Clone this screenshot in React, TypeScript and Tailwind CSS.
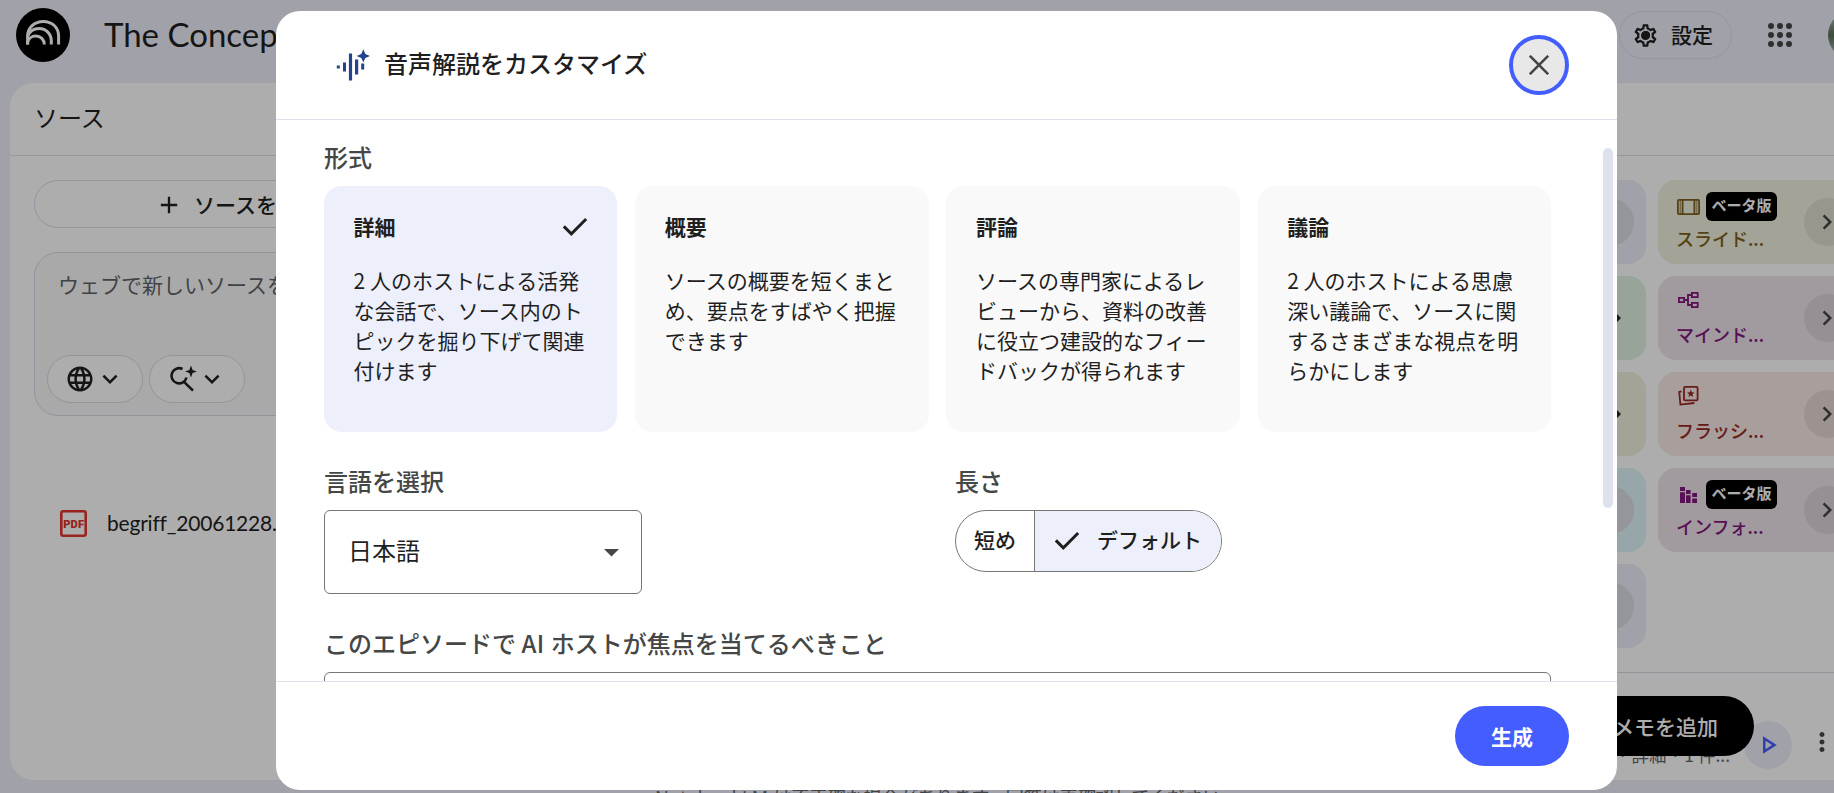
import React from "react";
import { MdAdd, MdChevronRight, MdKeyboardArrowDown, MdLanguage, MdMoreVert, MdOutlinePlayArrow, MdOutlineSettings } from "react-icons/md";

const CheckIcon = ({ className }: { className?: string }) => (
  <svg viewBox="0 0 24 24" className={`size-9 shrink-0 ${className ?? ""}`} fill="#1f1f1f">
    <path d="m9.55 18-5.7-5.7 1.425-1.425L9.55 15.15l9.175-9.175L20.15 7.4z" />
  </svg>
);

const Logo = () => (
  <svg viewBox="0 0 54 54" className="size-[54px] shrink-0">
    <circle cx="27" cy="27" r="27" fill="#000" />
    <g fill="none" stroke="#fff" strokeWidth="3">
      <path d="M11.6 36.6V28.2C11.6 19.5 18.5 13.4 27.3 13.4S42.6 19.5 42.6 28.2V36.6" />
      <path d="M11.6 28.5C13.5 23.5 18 20.6 23.2 20.6C30 20.6 35.3 26 35.3 32.8V36.6" />
      <path d="M11.6 36.6V34.5C12.3 30.8 15.6 28 19.8 28C24.6 28 28.3 31.6 28.3 36.6" />
    </g>
  </svg>
);

const SlidesIcon = () => (
  <svg viewBox="0 0 23 16" className="ml-px h-4 w-[23px]" fill="none" stroke="#7d6020" strokeWidth="1.8">
    <rect x="0.9" y="0.9" width="21.2" height="14.2" rx="1" />
    <path d="M5.6 1v14M17.4 1v14" />
    <path d="M3.2 1v14M19.8 1v14" strokeWidth="0.8" />
  </svg>
);

const MindMapIcon = () => (
  <svg viewBox="0 0 21 16" className="ml-0.5 h-4 w-[21px]" fill="none" stroke="#82177d" strokeWidth="1.8">
    <rect x="0.9" y="5.9" width="5.2" height="4.2" />
    <rect x="13.9" y="0.9" width="5.8" height="4.2" />
    <rect x="13.9" y="10.9" width="5.8" height="4.2" />
    <path d="M6 8h4M14 3h-4v10h4" />
  </svg>
);

const FlashcardsIcon = () => (
  <svg viewBox="0 0 21 20" className="ml-0.5 h-5 w-[21px]" fill="none" stroke="#992826" strokeWidth="1.8">
    <rect x="6" y="0.9" width="13.6" height="13.4" rx="1" />
    <path d="M3.6 5.4 1.2 6 2.4 18.6 16.4 17" />
    <path fill="#992826" stroke="none" d="m12.8 3.6 1 2.6 2.8.2-2.1 1.8.7 2.8-2.4-1.5-2.4 1.5.7-2.8L9 6.4l2.8-.2z" />
  </svg>
);

const InfographicIcon = () => (
  <svg viewBox="0 0 18 16" className="mr-0.5 ml-1 h-4 w-[18px]" fill="#82177d">
    <path d="M0 0h5v4H0zM0 5.2h5V16H0zM6 3h4.6v4H6zM6 8.2h4.6V16H6zM12.2 6H17v4h-4.8zM12.2 11.4H17V16h-4.8z" />
  </svg>
);

type Tool = { label: string; icon: React.ReactNode; beta?: boolean; bg: string; fg: string };
const tools: Tool[] = [
  { label: "スライド...", icon: <SlidesIcon />, beta: true, bg: "bg-[#f0f0df]", fg: "text-[#7d6020]" },
  { label: "マインド...", icon: <MindMapIcon />, bg: "bg-[#eee5ec]", fg: "text-[#82177d]" },
  { label: "フラッシ...", icon: <FlashcardsIcon />, bg: "bg-[#f8eae7]", fg: "text-[#992826]" },
  { label: "インフォ...", icon: <InfographicIcon />, beta: true, bg: "bg-[#eee5ec]", fg: "text-[#82177d]" },
];
const sideTools = [
  { bg: "bg-[#edeffa]", circle: true },
  { bg: "bg-[#e0f1e3]", circle: false },
  { bg: "bg-[#f0f0df]", circle: false },
  { bg: "bg-[#def5fa]", circle: true },
  { bg: "bg-[#edeffa]", circle: true },
];

const formats = [
  { title: "詳細", lines: ["2 人のホストによる活発", "な会話で、ソース内のト", "ピックを掘り下げて関連", "付けます"], selected: true },
  { title: "概要", lines: ["ソースの概要を短くまと", "め、要点をすばやく把握", "できます"] },
  { title: "評論", lines: ["ソースの専門家によるレ", "ビューから、資料の改善", "に役立つ建設的なフィー", "ドバックが得られます"] },
  { title: "議論", lines: ["2 人のホストによる思慮", "深い議論で、ソースに関", "するさまざまな視点を明", "らかにします"] },
];

function TopBar() {
  return (
    <header className="flex h-[83px] w-[1876px] shrink-0 items-start pl-4">
      <div className="pt-2">
        <Logo />
      </div>
      <h1 className="ml-[34px] mt-3 flex-1 font-['Lato','Noto_Sans_CJK_JP',sans-serif] text-[33px] leading-[44px] whitespace-nowrap">The Concept</h1>
      <div className="mt-[11px] flex w-[257px] shrink-0 items-center">
        <button className="flex h-12 w-[113px] shrink-0 items-center rounded-full border border-[#dddfe8] pl-3 text-[21px] font-medium whitespace-nowrap">
          <span className="grid size-[27px] place-items-center">
            <MdOutlineSettings className="col-start-1 row-start-1 size-[27px]" />
            <span className="col-start-1 row-start-1 size-2 rounded-full bg-[#1f1f1f]" />
          </span>
          <span className="ml-3">設定</span>
        </button>
        <svg viewBox="0 0 24 24" className="ml-9 size-6 shrink-0" fill="#444746">
          {[3, 12, 21].map((y) => [3, 12, 21].map((x) => <circle key={`${x}-${y}`} cx={x} cy={y} r="3" />))}
        </svg>
        <span className="ml-9 size-12 shrink-0 rounded-full bg-linear-to-b from-[#b5cdd5] via-[#5c7058] to-[#b5c2c6]" />
      </div>
    </header>
  );
}

function Chip({ children }: { children: React.ReactNode }) {
  return (
    <span className="flex h-12 w-24 items-center rounded-full border border-[#d9dbe8] bg-white pl-[17px]">
      {children}
      <MdKeyboardArrowDown className="size-[30px]" />
    </span>
  );
}

function SourcesPanel() {
  return (
    <section className="flex w-[400px] shrink-0 flex-col rounded-3xl bg-white">
      <h2 className="h-[73px] shrink-0 border-b border-[#dddfec] pl-6 pt-[18px] text-[24px] leading-[32px]">ソース</h2>
      <div className="flex flex-1 flex-col px-6 pt-6">
        <button className="flex h-12 items-center rounded-full border border-[#d9dbe8] pt-px pl-[120px] text-[21px] font-medium whitespace-nowrap">
          <MdAdd className="size-7 shrink-0" />
          <span className="ml-[11px]">ソースを追加</span>
        </button>
        <div className="mt-6 flex h-[164px] flex-col justify-between rounded-3xl border border-[#d9dbe8] bg-[#fafafa] p-3">
          <p className="pl-[11px] pt-1 text-[21px] leading-[30px] whitespace-nowrap text-[#5f6368]">ウェブで新しいソースを検索</p>
          <div className="flex gap-1.5">
            <Chip>
              <MdLanguage className="size-[30px]" />
            </Chip>
            <Chip>
              <svg viewBox="0 0 30 30" className="size-[30px]" fill="none" stroke="#1f1f1f" strokeWidth="2.6">
                <path d="M15.5 5A7.6 7.6 0 1 0 19.5 13.5M16.8 17.6 26 26.6" />
                <path fill="#1f1f1f" stroke="none" d="M24 1.6 25.6 5.9 29.9 7.5 25.6 9.1 24 13.4 22.4 9.1 18.1 7.5 22.4 5.9z" />
              </svg>
            </Chip>
          </div>
        </div>
        <div className="mt-[93px] flex h-[30px] items-center pl-[26px]">
          <svg viewBox="0 0 27 27" className="-mt-px size-[27px] shrink-0">
            <rect x="1.3" y="1.3" width="24.4" height="24.4" rx="2" fill="none" stroke="#e0352c" strokeWidth="2.6" />
            <text x="13.7" y="17.8" textAnchor="middle" fontFamily="Roboto" fontWeight="900" fontSize="11.2" letterSpacing="0.1" fill="#e0352c">
              PDF
            </text>
          </svg>
          <span className="-mt-0.5 ml-5 font-['Lato','Noto_Sans_CJK_JP',sans-serif] text-[21px] leading-[30px] tracking-[-0.2px]">begriff_20061228.pdf</span>
        </div>
      </div>
    </section>
  );
}

function StudioPanel() {
  return (
    <section className="relative flex w-[472px] shrink-0 flex-col rounded-3xl bg-white">
      <div className="h-[73px] shrink-0 border-b border-[#dddfec]" />
      <div className="flex h-[517px] shrink-0 gap-3 border-b border-[#d5dae8] px-6 pt-6">
        <div className="flex w-[206px] flex-col gap-3">
          {sideTools.map((t, i) => (
            <div key={i} className={`flex h-21 items-center justify-end rounded-[18px] pr-3 ${t.bg}`}>
              <span className={`flex size-12 items-center justify-center rounded-full ${t.circle ? "bg-[#dadde6]" : "pl-3"}`}>
                <MdChevronRight className="size-[30px]" />
              </span>
            </div>
          ))}
        </div>
        <div className="flex w-[206px] flex-col gap-3">
          {tools.map((t) => (
            <div key={t.label} className={`flex h-21 items-center justify-between rounded-[18px] pr-3 pl-[18px] ${t.bg} ${t.fg}`}>
              <div className="flex h-full flex-col justify-between pt-3 pb-3.5">
                <div className={`flex items-center gap-1.5 ${t.beta ? "h-[29px]" : "h-6"}`}>
                  {t.icon}
                  {t.beta && <span className="flex h-[29px] w-[71px] items-center justify-center rounded-md bg-black pb-0.5 text-[15px] font-bold text-white">ベータ版</span>}
                </div>
                <span className="text-[18px] leading-6 font-medium">{t.label}</span>
              </div>
              <span className="flex size-12 shrink-0 items-center justify-center rounded-full bg-black/7 pr-0.5 text-[#444746]">
                <MdChevronRight className="size-[30px]" />
              </span>
            </div>
          ))}
        </div>
      </div>
      <div className="flex flex-1 items-start pl-[176px] pt-12">
        <span className="mt-[22px] flex w-[152px] justify-end pr-3.5 text-[17.5px] leading-6 whitespace-nowrap text-[#5f6368]">ソース · 詳細 · 1 件...</span>
        <span className="grid size-12 shrink-0 place-items-center rounded-full bg-[#edeffa] text-[#445dff]">
          <MdOutlinePlayArrow className="size-[30px]" />
        </span>
        <MdMoreVert className="mt-1.5 ml-[15px] size-[30px] shrink-0 text-[#444746]" />
      </div>
      <button className="absolute right-[134px] bottom-6 flex h-15 w-[190px] items-center justify-end rounded-full bg-black pt-px pr-9 text-[21px] font-medium text-white">メモを追加</button>
    </section>
  );
}

function CustomizeDialog() {
  return (
    <div className="flex h-[779px] w-[1341px] flex-col overflow-hidden rounded-3xl bg-white">
      <div className="flex h-[109px] shrink-0 items-center border-b border-[#dfe1ec] pr-12 pl-[60px]">
        <svg viewBox="0 0 34 32" className="h-8 w-[34px]" fill="#23438c">
          <path d="M.8 16.4h3v3h-3zM7 13.4h3v9H7zM12.9 4.4h3.2v27h-3.2zM19 10.4h3.2v15H19zM25.2 14.4h3v6h-3z" />
          <path d="M27.3.2 29.3 4.9 34 6.9 29.3 8.9 27.3 13.6 25.3 8.9 20.6 6.9 25.3 4.9z" />
        </svg>
        <h2 className="ml-3.5 flex-1 pb-[5px] text-[24px] leading-8 font-medium">音声解説をカスタマイズ</h2>
        <button className="grid size-15 place-items-center rounded-full border-4 border-[#445dff] bg-[#e8e8e8]">
          <svg viewBox="0 0 20 20" className="size-5" fill="none" stroke="#444746" strokeWidth="2.6">
            <path d="m.8.8 18.4 18.4M19.2.8.8 19.2" />
          </svg>
        </button>
      </div>
      <div className="flex min-h-0 flex-1 overflow-hidden">
        <div className="ml-12 w-[1227px] shrink-0 pt-[21px]">
          <h3 className="text-[24px] leading-8 font-medium text-[#444746]">形式</h3>
          <div className="mt-[13px] grid grid-cols-4 gap-[17.8px]">
            {formats.map((f) => (
              <div key={f.title} className={`h-[246px] rounded-[18px] pt-[23px] pl-[29.6px] ${f.selected ? "bg-[#edeffa]" : "bg-[#f9f9f9]"}`}>
                <div className="flex h-9 items-center justify-between pr-6 text-[21px] font-bold">
                  {f.title}
                  {f.selected && <CheckIcon />}
                </div>
                <p className="mt-5 text-[21px] leading-[30px] whitespace-nowrap">
                  {f.lines.map((l) => (
                    <span key={l} className="block">
                      {l}
                    </span>
                  ))}
                </p>
              </div>
            ))}
          </div>
          <div className="mt-[33px] flex">
            <div className="w-[631px]">
              <h3 className="text-[24px] leading-8 font-medium text-[#444746]">言語を選択</h3>
              <div className="mt-[13px] flex h-21 w-[318px] items-center justify-between rounded-md border border-[#747775] pr-[22px] pl-[23px] text-[24px]">
                <span className="pb-[5px]">日本語</span>
                <svg viewBox="0 0 15 8" className="mt-0.5 h-2 w-[15px]" fill="#444746">
                  <path d="M0 0h15L7.5 7.5z" />
                </svg>
              </div>
            </div>
            <div>
              <h3 className="text-[24px] leading-8 font-medium text-[#444746]">長さ</h3>
              <div className="mt-[13px] flex h-[62px] w-[267px] overflow-hidden rounded-full border border-[#747775] text-[21px] font-medium">
                <span className="flex w-[79px] items-center border-r border-[#747775] pb-0.5 pl-[18px]">短め</span>
                <span className="flex flex-1 items-center bg-[#edeffa] pl-3.5">
                  <CheckIcon />
                  <span className="ml-3 pb-0.5">デフォルト</span>
                </span>
              </div>
            </div>
          </div>
          <h3 className="mt-[33px] text-[24px] leading-8 font-medium text-[#444746]">
            このエピソードで <span className="tracking-[0.5px]">AI </span>ホストが焦点を当てるべきこと
          </h3>
          <div className="mt-[13px] h-40 rounded-md border border-[#747775]" />
        </div>
        <div className="mt-7 ml-[52px] h-[360px] w-2.5 rounded-full bg-[#dde1eb]" />
      </div>
      <div className="flex h-[109px] shrink-0 items-center justify-end border-t border-[#dfe1ec] pr-12">
        <button className="h-15 w-[114px] rounded-full bg-[#445dff] pt-px text-[21px] font-bold text-white">生成</button>
      </div>
    </div>
  );
}

export default function App() {
  return (
    <div className="relative h-[793px] w-full overflow-hidden bg-[#edeffa] font-['Noto_Sans_CJK_JP',sans-serif] text-[#1f1f1f]">
      <div className="flex h-full flex-col">
        <TopBar />
        <div className="flex h-[697px] shrink-0 pl-2.5">
          <SourcesPanel />
          <div className="mx-6 w-[958px] shrink-0 rounded-3xl bg-white" />
          <StudioPanel />
        </div>
        <p className="mt-1 ml-[655px] shrink-0 text-[18px] leading-6 whitespace-nowrap text-[#5f6368]">
          <span className="font-['Noto_Sans'] tracking-[0.4px]">NotebookLM </span>
          は不正確な場合があります。回答は再確認してください。
        </p>
      </div>
      <div className="absolute inset-0 bg-black/32 pt-[11px] pl-[276px]">
        <CustomizeDialog />
      </div>
    </div>
  );
}
